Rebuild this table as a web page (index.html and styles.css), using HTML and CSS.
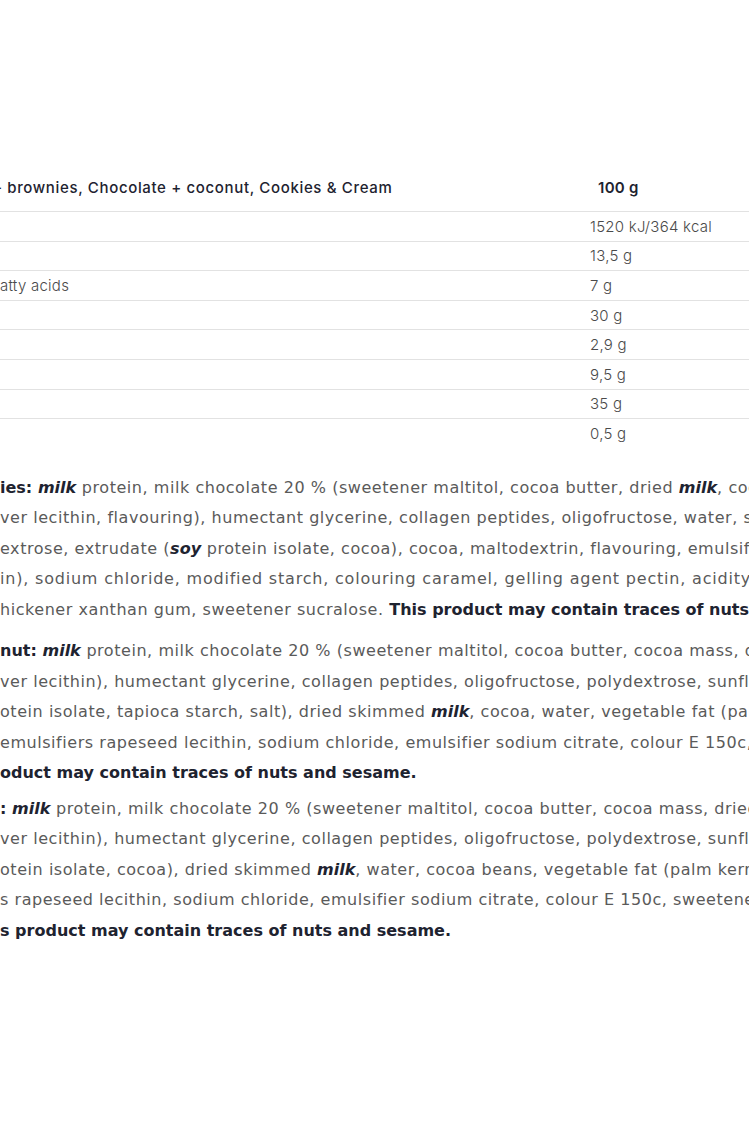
FILE: index.html
```html
<!DOCTYPE html>
<html lang="en">
<head>
<meta charset="utf-8">
<title>Nutrition</title>
<link rel="stylesheet" href="styles.css">
</head>
<body>
<main class="page">
  <section class="nutri">
    <div class="row head">
      <div class="label head-label">- brownies, Chocolate + coconut, Cookies &amp; Cream</div>
      <div class="value head-value">100 g</div>
    </div>
    <div class="row"><div class="label"></div><div class="value">1520 kJ/364 kcal</div></div>
    <div class="row"><div class="label"></div><div class="value">13,5 g</div></div>
    <div class="row"><div class="label">atty acids</div><div class="value">7 g</div></div>
    <div class="row"><div class="label"></div><div class="value">30 g</div></div>
    <div class="row"><div class="label"></div><div class="value">2,9 g</div></div>
    <div class="row"><div class="label"></div><div class="value">9,5 g</div></div>
    <div class="row"><div class="label"></div><div class="value">35 g</div></div>
    <div class="row last"><div class="label"></div><div class="value">0,5 g</div></div>
  </section>

  <section class="ingredients">
    <p class="para p1">
      <span class="line"><b>ies:</b> <b><i>milk</i></b> protein, milk chocolate 20 % (sweetener maltitol, cocoa butter, dried <b><i>milk</i></b>, cocoa</span>
      <span class="line">ver lecithin, flavouring), humectant glycerine, collagen peptides, oligofructose, water, sunflower</span>
      <span class="line">extrose, extrudate (<b><i>soy</i></b> protein isolate, cocoa), cocoa, maltodextrin, flavouring, emulsifier</span>
      <span class="line wide">in), sodium chloride, modified starch, colouring caramel, gelling agent pectin, acidity regulator</span>
      <span class="line">hickener xanthan gum, sweetener sucralose. <b>This product may contain traces of nuts and</b></span>
    </p>
    <p class="para p2">
      <span class="line"><b>nut:</b> <b><i>milk</i></b> protein, milk chocolate 20 % (sweetener maltitol, cocoa butter, cocoa mass, dried</span>
      <span class="line">ver lecithin), humectant glycerine, collagen peptides, oligofructose, polydextrose, sunflower</span>
      <span class="line">otein isolate, tapioca starch, salt), dried skimmed <b><i>milk</i></b>, cocoa, water, vegetable fat (palm</span>
      <span class="line">emulsifiers rapeseed lecithin, sodium chloride, emulsifier sodium citrate, colour E 150c, sweetener</span>
      <span class="line"><b>oduct may contain traces of nuts and sesame.</b></span>
    </p>
    <p class="para p3">
      <span class="line"><b>:</b> <b><i>milk</i></b> protein, milk chocolate 20 % (sweetener maltitol, cocoa butter, cocoa mass, dried</span>
      <span class="line">ver lecithin), humectant glycerine, collagen peptides, oligofructose, polydextrose, sunflower</span>
      <span class="line">otein isolate, cocoa), dried skimmed <b><i>milk</i></b>, water, cocoa beans, vegetable fat (palm kernel</span>
      <span class="line">s rapeseed lecithin, sodium chloride, emulsifier sodium citrate, colour E 150c, sweetener</span>
      <span class="line"><b>s product may contain traces of nuts and sesame.</b></span>
    </p>
  </section>
</main>
</body>
</html>
```

FILE: styles.css
```css
html, body {
  margin: 0;
  padding: 0;
  background: #ffffff;
}
body {
  width: 749px;
  height: 1124px;
  overflow: hidden;
  font-family: "Inter", "Liberation Sans", sans-serif;
  color: #4a4a4a;
}
.page {
  padding-top: 164px;
}
.nutri {
  display: flex;
  flex-direction: column;
}
.row {
  display: grid;
  grid-template-columns: 590px 1fr;
  align-items: center;
  height: 28.6px;
  border-bottom: 1px solid #e2e2e2;
  font-size: 15px;
  font-weight: 300;
  letter-spacing: 0.25px;
  color: #4a4a4a;
  white-space: nowrap;
}
.row.head {
  height: 47px;
  font-size: 15px;
  font-weight: 500;
  letter-spacing: 0.65px;
  color: #1e2330;
}
.row.last {
  border-bottom: none;
}
.label {
  overflow: hidden;
}
.head-label {
  text-indent: -5px;
}
.head-value {
  padding-left: 8px;
  font-weight: 600;
  letter-spacing: 0.3px;
}
.ingredients {
  padding-top: 25px;
}
.para {
  margin: 0;
  font-family: "DejaVu Sans", "Liberation Sans", sans-serif;
  font-size: 16px;
  font-weight: 400;
  line-height: 30.5px;
  letter-spacing: 0.55px;
  color: #5a5a5a;
}
.p1 { margin-bottom: 11px; }
.p2 { margin-bottom: 5px; }
.line {
  display: block;
  white-space: nowrap;
  overflow: hidden;
}
.line.wide {
  letter-spacing: 0.8px;
}
.para b {
  font-weight: 700;
  letter-spacing: 0;
  color: #1e2330;
}
.para i {
  font-style: italic;
}
```
